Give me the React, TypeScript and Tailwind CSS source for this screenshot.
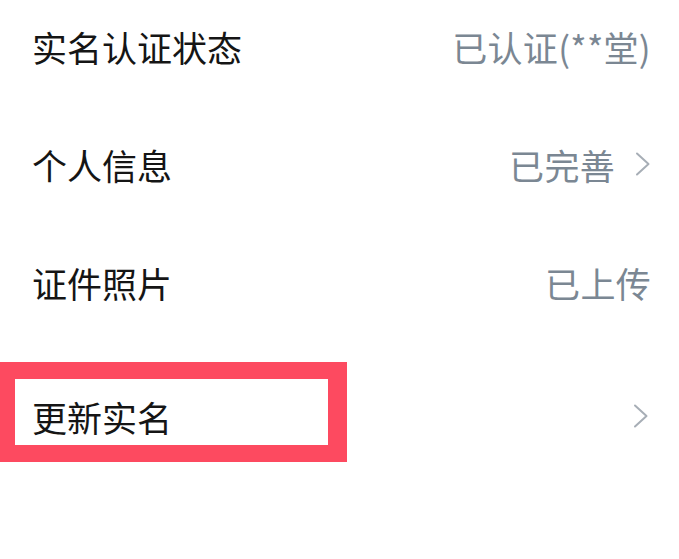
import React from 'react';

type Row = {
  label: string;
  value?: string;
  arrow?: boolean;
};

const ROWS: Row[] = [
  { label: '实名认证状态', value: '已认证(**堂)' },
  { label: '个人信息', value: '已完善', arrow: true },
  { label: '证件照片', value: '已上传' },
];

const Chevron: React.FC = () => (
  <svg width="16" height="24" viewBox="0 0 16 24" fill="none" className="shrink-0">
    <polyline points="2,1.5 13.5,12 2,22.5" stroke="#a7aeb6" strokeWidth="2" strokeLinecap="round" strokeLinejoin="round" />
  </svg>
);

const App: React.FC = () => {
  return (
    <div
      className="w-[679px] h-[559px] bg-white overflow-hidden"
      style={{ fontFamily: '"Noto Sans CJK SC", "Noto Sans", sans-serif' }}
    >
      <div className="-mt-[13px] flex flex-col">
        {ROWS.map(row => (
          <div key={row.label} className="h-[118px] flex items-center justify-between pl-[32px] pr-[28px]">
            <span className="text-[35px] leading-none text-[#151515]">{row.label}</span>
            <div className="flex items-center gap-[20px]">
              <span className="text-[35px] leading-none tracking-[0.3px] text-[#7b8793]">{row.value}</span>
              {row.arrow && <Chevron />}
            </div>
          </div>
        ))}

        {/* 更新实名 row, highlighted */}
        <div className="relative mt-[16px] h-[118px] flex items-center justify-between pl-[32px] pr-[30px]">
          <div className="absolute left-0 top-[5px] w-[347px] h-[100px] border-[#fd4a60] border-y-[17px] border-l-[15px] border-r-[19px]" />
          <span className="relative text-[35px] leading-none text-[#151515]">更新实名</span>
          <Chevron />
        </div>
      </div>
    </div>
  );
};

export default App;
